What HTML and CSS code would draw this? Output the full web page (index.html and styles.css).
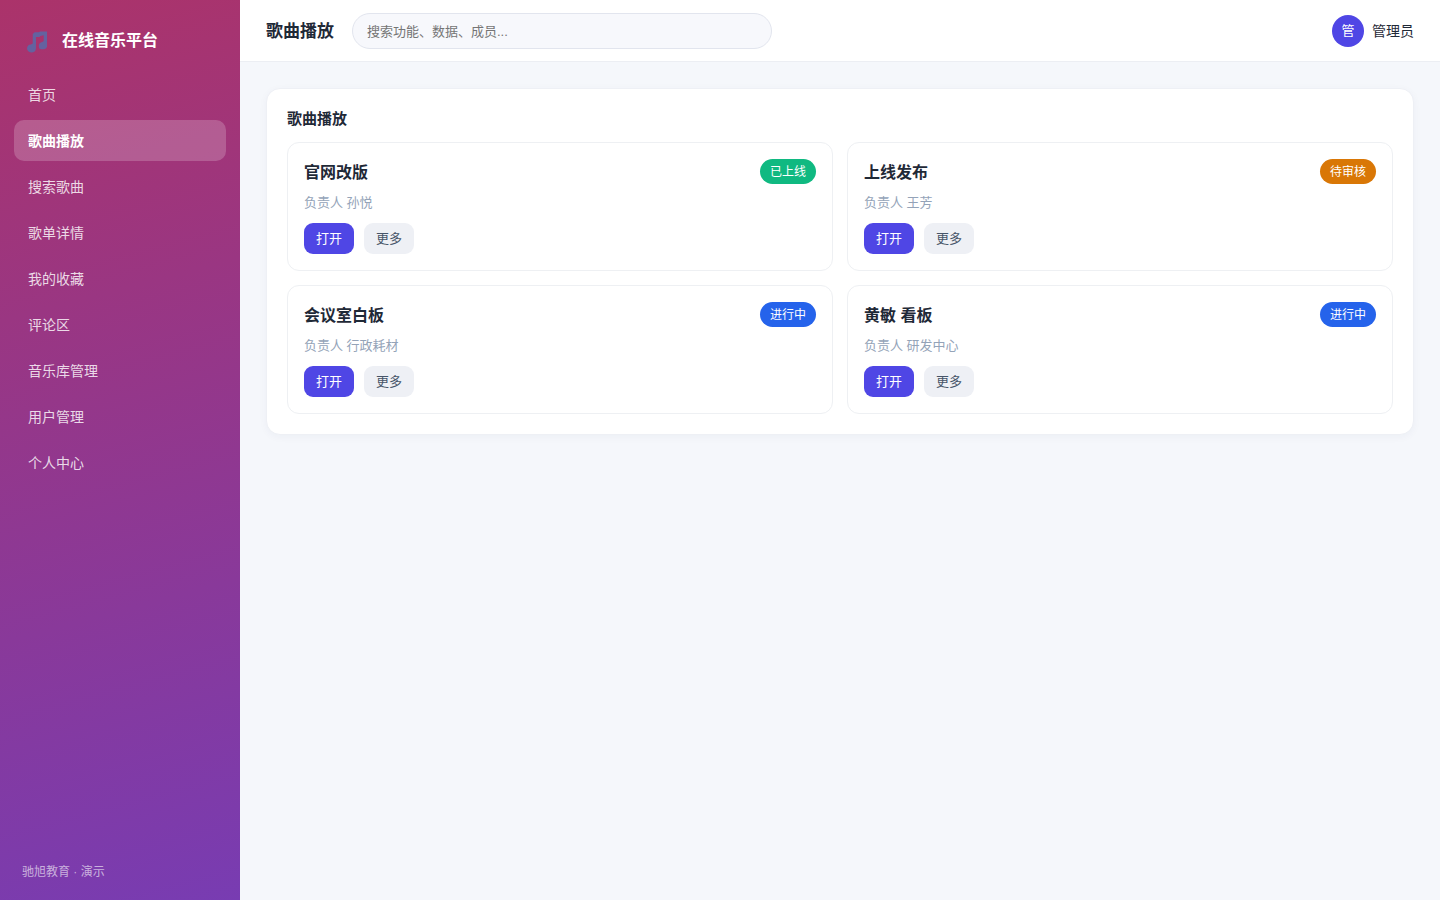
FILE: index.html
```html
<!DOCTYPE html>
<html lang="zh-CN">
<head>
<meta charset="utf-8">
<meta name="viewport" content="width=device-width, initial-scale=1">
<title>在线音乐平台</title>
<link rel="stylesheet" href="styles.css">
</head>
<body>
<div class="app">
  <aside class="sidebar">
    <div class="brand">
      <svg class="brand-icon" viewBox="0 0 22 24" aria-hidden="true"><path d="M6 4.2 8 2.4h4L14 1.4h7V17.5Q20.5 20 17.5 20h-2.800Q12.400 20 12.400 17.500V16.500Q12.400 13 16 12.500L17.500 11.500V5.500L14 6.200 13 7.200H9.400V19Q9 23.500 4.500 23.500 0 23 0 19.200 0.500 15.500 4 15.200L6 14.200Z"/></svg>
      <span>在线音乐平台</span>
    </div>
    <nav class="nav">
      <a href="#">首页</a>
      <a href="#" class="active" aria-current="page">歌曲播放</a>
      <a href="#">搜索歌曲</a>
      <a href="#">歌单详情</a>
      <a href="#">我的收藏</a>
      <a href="#">评论区</a>
      <a href="#">音乐库管理</a>
      <a href="#">用户管理</a>
      <a href="#">个人中心</a>
    </nav>
    <div class="side-foot">驰旭教育 · 演示</div>
  </aside>
  <div class="main">
    <header class="topbar">
      <h1>歌曲播放</h1>
      <input class="search" type="search" aria-label="搜索" placeholder="搜索功能、数据、成员...">
      <div class="user"><span class="avatar">管</span><span>管理员</span></div>
    </header>
    <main class="content">
      <section class="panel">
        <h2>歌曲播放</h2>
        <div class="grid">
          <article class="card">
            <div class="card-head"><h3>官网改版</h3><span class="badge online">已上线</span></div>
            <p>负责人 孙悦</p>
            <div class="actions"><button type="button" class="primary">打开</button><button type="button">更多</button></div>
          </article>
          <article class="card">
            <div class="card-head"><h3>上线发布</h3><span class="badge pending">待审核</span></div>
            <p>负责人 王芳</p>
            <div class="actions"><button type="button" class="primary">打开</button><button type="button">更多</button></div>
          </article>
          <article class="card">
            <div class="card-head"><h3>会议室白板</h3><span class="badge running">进行中</span></div>
            <p>负责人 行政耗材</p>
            <div class="actions"><button type="button" class="primary">打开</button><button type="button">更多</button></div>
          </article>
          <article class="card">
            <div class="card-head"><h3>黄敏 看板</h3><span class="badge running">进行中</span></div>
            <p>负责人 研发中心</p>
            <div class="actions"><button type="button" class="primary">打开</button><button type="button">更多</button></div>
          </article>
        </div>
      </section>
    </main>
  </div>
</div>
</body>
</html>
```
FILE: styles.css
```css
* { box-sizing: border-box; }
body {
  margin: 0;
  background: #f5f7fb;
  color: #1f2937;
  font: 14px/21px "Liberation Sans", "Noto Sans CJK SC", sans-serif;
}
h1, h2, h3, p { margin: 0; }
button, input { font-family: inherit; }
.app { display: flex; min-height: 100vh; }

.sidebar {
  flex: 0 0 240px;
  display: flex;
  flex-direction: column;
  padding: 28px 14px 17px;
  background: linear-gradient(165deg, #ab336a, #783cb2);
  color: #fff;
}
.brand {
  display: flex;
  align-items: center;
  gap: 14px;
  padding: 0 13px;
  margin-bottom: 20px;
  font-size: 16px;
  font-weight: 700;
  line-height: 26px;
}
.brand-icon { width: 21px; height: 23px; fill: #6462a0; }
.nav { display: flex; flex-direction: column; gap: 5px; }
.nav a {
  padding: 11px 14px 9px;
  border-radius: 10px;
  color: rgba(255, 255, 255, .82);
  text-decoration: none;
}
.nav .active { background: rgba(255, 255, 255, .2); color: #fff; font-weight: 700; }
.side-foot {
  margin-top: auto;
  padding: 0 8px;
  color: rgba(255, 255, 255, .6);
  font-size: 12px;
}

.main { flex: 1; min-width: 0; }
.topbar {
  display: flex;
  align-items: center;
  gap: 18px;
  padding: 13px 26px 12px;
  background: #fff;
  border-bottom: 1px solid #eceef3;
}
.topbar h1 { padding-top: 2px; font-size: 17px; line-height: 26px; }
.search {
  flex: 0 1 420px;
  min-width: 0;
  height: 36px;
  padding: 0 14px;
  border: 1px solid #e2e5ee;
  border-radius: 18px;
  background: #f7f8fc;
  color: #1f2937;
  font-size: 13px;
  appearance: none;
}
.search::placeholder { color: #757575; }
.user { display: flex; align-items: center; gap: 8px; margin-left: auto; }
.avatar {
  width: 32px;
  height: 32px;
  border-radius: 50%;
  background: #4f46e5;
  color: #fff;
  font-size: 13px;
  line-height: 32px;
  text-align: center;
}

.content { padding: 26px; }
.panel {
  padding: 20px;
  background: #fff;
  border: 1px solid #eef0f5;
  border-radius: 14px;
  box-shadow: 0 2px 8px rgba(30, 41, 90, .04);
}
.panel h2 { margin-bottom: 14px; font-size: 15px; line-height: 19px; }
.grid { display: grid; grid-template-columns: repeat(2, minmax(0, 1fr)); gap: 14px; }
.card { padding: 16px; border: 1px solid #eef0f3; border-radius: 12px; }
.card-head { display: flex; align-items: center; justify-content: space-between; }
.card h3 { padding-top: 2px; font-size: 16px; line-height: 23px; }
.badge {
  padding: 2px 10px 0;
  border-radius: 13px;
  color: #fff;
  font-size: 12px;
  line-height: 23px;
}
.online { background: #10b981; }
.pending { background: #d97706; }
.running { background: #2563eb; }
.card p { margin: 8px 0 10px; color: #94a3b8; font-size: 13px; }
.actions { display: flex; gap: 10px; }
.actions button {
  padding: 0 12px;
  border: 0;
  border-radius: 9px;
  background: #eef0f5;
  color: #475569;
  font-size: 13px;
  line-height: 31px;
}
.actions .primary { background: #4f46e5; color: #fff; }
```
